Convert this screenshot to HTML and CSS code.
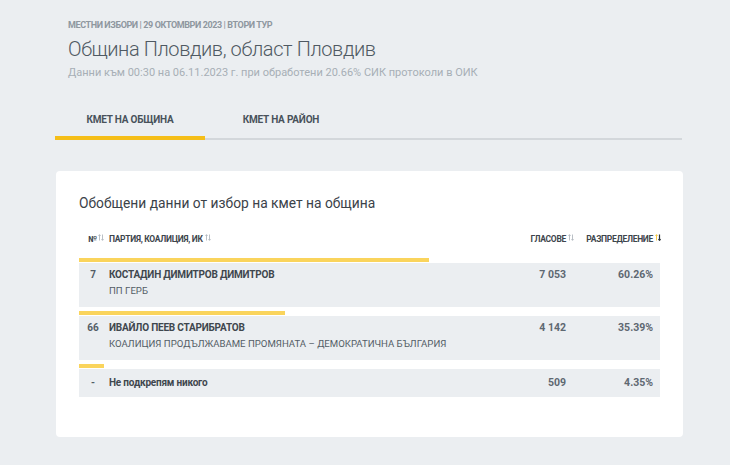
FILE: index.html
```html
<!DOCTYPE html>
<html lang="bg">
<head>
	<meta charset="UTF-8">
	<title>Община Пловдив</title>
	<link rel="stylesheet" href="styles.css">
</head>
<body>
	<div class="page">
		<div class="head">
			<p class="kicker">МЕСТНИ ИЗБОРИ | 29 ОКТОМВРИ 2023 | ВТОРИ ТУР</p>
			<h1>Община Пловдив, област Пловдив</h1>
			<p class="sub">Данни към 00:30 на 06.11.2023 г. при обработени 20.66% СИК протоколи в ОИК</p>
		</div>
		<ul class="tabs">
			<li class="active">КМЕТ НА ОБЩИНА</li>
			<li>КМЕТ НА РАЙОН</li>
		</ul>
		<div class="card">
			<h2>Обобщени данни от избор на кмет на община</h2>
			<div class="thead">
				<span class="c-num">№<svg class="sort" viewBox="0 0 6 7"><path d="M1.5 6.5V0.7M0.4 1.8L1.5 0.7l1.1 1.1"/><path d="M4.5 0.5v5.8M3.4 5.2l1.1 1.1 1.1-1.1"/></svg></span>
				<span class="c-name">ПАРТИЯ, КОАЛИЦИЯ, ИК<svg class="sort" viewBox="0 0 6 7"><path d="M1.5 6.5V0.7M0.4 1.8L1.5 0.7l1.1 1.1"/><path d="M4.5 0.5v5.8M3.4 5.2l1.1 1.1 1.1-1.1"/></svg></span>
				<span class="c-val">ГЛАСОВЕ<svg class="sort" viewBox="0 0 6 7"><path d="M1.5 6.5V0.7M0.4 1.8L1.5 0.7l1.1 1.1"/><path d="M4.5 0.5v5.8M3.4 5.2l1.1 1.1 1.1-1.1"/></svg></span>
				<span class="c-pct">РАЗПРЕДЕЛЕНИЕ<svg class="sort on" viewBox="0 0 6 7"><path class="up" d="M1.5 6.5V0.7M0.4 1.8L1.5 0.7l1.1 1.1"/><path class="down" d="M4.5 0.5v5.8M3.4 5.2l1.1 1.1 1.1-1.1"/></svg></span>
			</div>

			<div class="bar" style="width: 60.26%"></div>
			<div class="row">
				<span class="c-num">7</span>
				<span class="c-name"><b>КОСТАДИН ДИМИТРОВ ДИМИТРОВ</b><br>ПП ГЕРБ</span>
				<span class="c-val">7 053</span>
				<span class="c-pct">60.26%</span>
			</div>

			<div class="bar" style="width: 35.39%"></div>
			<div class="row">
				<span class="c-num">66</span>
				<span class="c-name"><b>ИВАЙЛО ПЕЕВ СТАРИБРАТОВ</b><br>КОАЛИЦИЯ ПРОДЪЛЖАВАМЕ ПРОМЯНАТА – ДЕМОКРАТИЧНА БЪЛГАРИЯ</span>
				<span class="c-val">4 142</span>
				<span class="c-pct">35.39%</span>
			</div>

			<div class="bar" style="width: 4.35%"></div>
			<div class="row short">
				<span class="c-num">-</span>
				<span class="c-name"><b>Не подкрепям никого</b></span>
				<span class="c-val">509</span>
				<span class="c-pct">4.35%</span>
			</div>
		</div>
	</div>
</body>
</html>
```

FILE: styles.css
```css
*{
	margin: 0px;
	padding: 0px;
	list-style: none;
	box-sizing: border-box;
}
body{
	background-color: #ebeef1;
	font-family: Roboto, "Noto Sans", sans-serif;
	color: #4f5a64;
}
.page{
	width: 628px;
	margin-left: 55px;
	padding-top: 20px;
}
.head{
	padding-left: 13px;
}
.kicker{
	font-size: 9px;
	font-weight: 700;
	letter-spacing: -0.4px;
	color: #8e979f;
	line-height: 11px;
}
h1{
	font-size: 20px;
	font-weight: 300;
	letter-spacing: -0.4px;
	color: #4f5962;
	line-height: 26px;
	margin-top: 5px;
}
.sub{
	font-size: 11px;
	color: #a7afb6;
	line-height: 14px;
	margin-top: 4px;
}
.tabs{
	display: flex;
	margin-top: 21px;
	border-bottom: 2px solid #d3d7db;
	width: 627px;
}
.tabs li{
	width: 150px;
	text-align: center;
	font-size: 10px;
	font-weight: 700;
	letter-spacing: -0.2px;
	color: #48525b;
	line-height: 13px;
	padding: 12px 0px 10px;
	border-bottom: 4px solid transparent;
	margin-bottom: -2px;
}
.tabs li + li{
	width: 152px;
}
.tabs li.active{
	border-bottom-color: #f5be18;
}
.card{
	margin-top: 31px;
	margin-left: 1px;
	background-color: #fff;
	border-radius: 4px;
	padding: 23px 23px 40px;
	height: 266px;
}
h2{
	font-size: 13.8px;
	font-weight: 400;
	color: #3b4249;
	line-height: 18px;
}
.thead, .row{
	display: grid;
	grid-template-columns: 28px 1fr 90px 87px;
	padding-right: 7px;
	width: 581px;
}
.thead{
	margin-top: 21px;
	margin-bottom: 13px;
	font-size: 8.5px;
	font-weight: 700;
	letter-spacing: -0.3px;
	color: #3d454c;
	line-height: 12px;
}
.thead .c-num{
	padding-left: 9px;
}
.thead .c-name{
	padding-left: 2px;
}
.thead .c-val, .thead .c-pct{
	text-align: right;
	margin-right: -8px;
}
.sort{
	width: 6px;
	height: 7px;
	margin-left: 2px;
	vertical-align: 1px;
	fill: none;
	stroke: #a8b0b7;
	stroke-width: 0.8;
}
.sort.on .up{
	stroke: #f5be18;
}
.sort.on .down{
	stroke: #2f353a;
	stroke-width: 1.2;
}
.bar{
	height: 4px;
	background-color: #fad45c;
	margin-bottom: 1px;
}
.row{
	background-color: #ebeef1;
	height: 44px;
	padding-top: 4px;
	margin-bottom: 4px;
	font-size: 10px;
	line-height: 16px;
	color: #535d66;
}
.row.short{
	height: 28px;
	padding-top: 6px;
}
.row .c-num{
	text-align: center;
	font-weight: 700;
}
.row .c-name{
	padding-left: 2px;
	font-size: 9.6px;
}
.row .c-name b{
	font-size: 10px;
	color: #3f474e;
	letter-spacing: -0.2px;
}
.row .c-val, .row .c-pct{
	text-align: right;
	font-weight: 700;
	color: #5e6871;
	font-size: 10.5px;
}
```
